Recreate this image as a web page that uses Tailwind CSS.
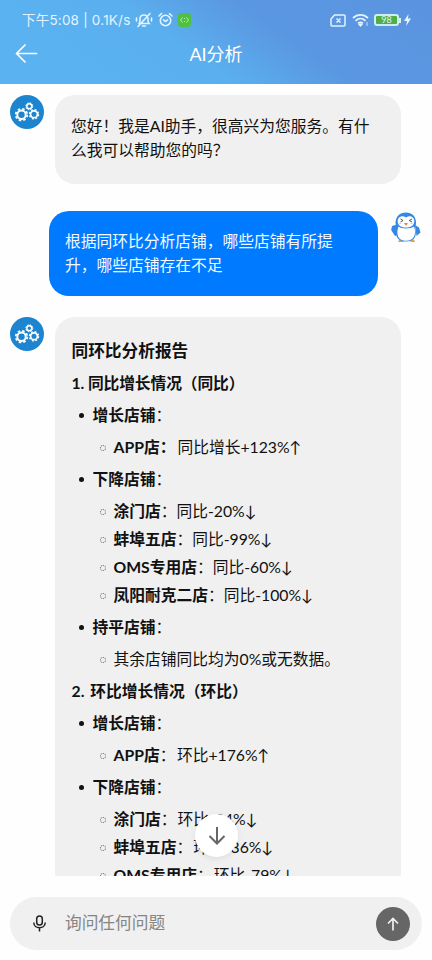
<!DOCTYPE html>
<html lang="zh-CN">
<head>
<meta charset="utf-8">
<meta name="viewport" content="width=device-width, initial-scale=1">
<title>AI分析</title>
<script src="https://cdn.jsdelivr.net/npm/@tailwindcss/browser@4"></script>
</head>
<body class="w-[432px] h-[960px] overflow-hidden bg-[#fefefe] flex flex-col font-['Lato','Noto_Sans_CJK_SC',sans-serif] text-[15.75px] text-[#111]">
<svg class="hidden">
  <defs>
    <g id="gears" fill="none" stroke="#fff">
      <circle cx="11.5" cy="19.700" r="4.200" stroke-width="2"/>
      <circle cx="11.5" cy="19.700" r="5.800" stroke-width="1.700" stroke-dasharray="2.500 2.055"/>
      <circle cx="24" cy="19.300" r="3.400" stroke-width="1.700"/>
      <circle cx="24" cy="19.300" r="4.600" stroke-width="1.300" stroke-dasharray="2 1.613"/>
      <circle cx="19.300" cy="11.300" r="2.500" stroke-width="1.500"/>
      <circle cx="19.300" cy="11.300" r="3.500" stroke-width="1" stroke-dasharray="1.500 1.249"/>
    </g>
  </defs>
</svg>

<header class="h-[84px] shrink-0 text-white bg-[linear-gradient(35deg,#5ab3f1_0%,#5ab0ef_42%,#5a97e2_64%,#5a94e0_100%)]">
  <div class="h-[40px] pl-[22px] pr-[21px] flex items-center justify-between">
    <div class="flex items-center text-[14px] text-[#e3f3ff]">
      <span class="whitespace-nowrap w-[113px] tracking-[0.2px] font-['Inter','Noto_Sans_CJK_SC',sans-serif] text-[13.500px]">下午5:08 | 0.1K/s</span>
      <svg class="w-[18px] h-[16px]" viewBox="0 0 18 16" fill="none" stroke="currentColor" stroke-width="1.600" stroke-linecap="round"><path d="M4 11.500h10c-1.200-1.200-1-2-1-4.500C13 4.500 11.500 3 9 3S5 4.500 5 7c0 2.500.2 3.300-1 4.500M7.500 14h3M15 1.500 3 14.500M1.500 6v3M16.500 6v3"/></svg>
      <svg class="ml-[5px] w-[15px] h-[16px]" viewBox="0 0 15 16" fill="none" stroke="currentColor" stroke-width="1.600" stroke-linecap="round"><circle cx="7.500" cy="8.500" r="5.200"/><path d="M1 4l2.500-2.300M14 4l-2.500-2.300M5.500 7.800l2 1.700 2-1.700"/></svg>
      <svg class="ml-[5px] w-[13px] h-[14px]" viewBox="0 0 13 14"><rect width="13" height="14" rx="3" fill="#4fc044"/><path d="M4.500 4.500 2.500 7l2 2.500M8.500 4.500l2 2.500-2 2.500M6 5.500h1M6 8.500h1" stroke="#b6eea2" fill="none"/></svg>
    </div>
    <div class="flex items-center text-[#e3f3ff]">
      <svg class="w-[16px] h-[13px]" viewBox="0 0 16 13" fill="none" stroke="currentColor" stroke-width="1.500"><path d="M4.500 1H14a1 1 0 0 1 1 1v9a1 1 0 0 1-1 1H2a1 1 0 0 1-1-1V5zM6.500 4.500l4 4M10.500 4.500l-4 4"/></svg>
      <svg class="ml-[6px] w-[17px] h-[14px]" viewBox="0 0 17 14" fill="none" stroke="currentColor" stroke-width="1.800"><path d="M1 5c4.300-4.200 10.700-4.200 15 0M3.500 7.800c3-2.900 7-2.900 10 0M6 10.400c1.500-1.300 3.500-1.300 5 0"/><path d="m8.500 13.500-2-2c1.200-1 2.800-1 4 0zM15 9v4" fill="currentColor" stroke-width=".8"/></svg>
      <div class="ml-[5px] w-[25px] h-[12px] rounded-[3px] border-2 border-[#d0edf0] bg-[#50ad47] text-[9px] leading-[8px] text-center">98</div>
      <div class="w-[2px] h-[5px] bg-[#d7f0ee]"></div>
      <svg class="ml-[3px] w-[7px] h-[12px]" viewBox="0 0 7 12" fill="currentColor"><path d="M4.500 0 0 7h3l-.8 5L7 4.500H4z"/></svg>
    </div>
  </div>
  <div class="h-[28px] pl-[15px] flex items-center relative">
    <svg class="w-[23px] h-[20px]" viewBox="0 0 23 20" fill="none" stroke="#fff" stroke-width="1.700" stroke-linecap="round" stroke-linejoin="round"><path d="M21.500 9.500H1.500M10 1 1.500 9.500 10 18"/></svg>
    <h1 class="absolute inset-x-0 text-center text-[18px] leading-[28px]">AI分析</h1>
  </div>
</header>

<main class="h-[792px] shrink-0 overflow-hidden pt-[11px] pl-[10px] relative">
  <section class="flex items-start gap-[11px]">
    <svg class="w-[34px] h-[34px] rounded-full bg-[#1d84cf]" viewBox="0 0 34 34"><use href="#gears"/></svg>
    <div class="w-[346px] h-[89px] rounded-[20px] bg-[#f0f0f0] pt-[19px] pl-[16px] leading-[23.600px] whitespace-nowrap">您好！我是AI助手，很高兴为您服务。有什<br>么我可以帮助您的吗？</div>
  </section>
  <section class="mt-[27px] ml-[39px] flex items-start gap-[12px]">
    <div class="w-[329px] h-[85px] rounded-[20px] bg-[#007bff] text-[#f4faff] pt-[18px] pl-[16px] leading-[23.600px] whitespace-nowrap">根据同环比分析店铺，哪些店铺有所提<br>升，哪些店铺存在不足</div>
    <svg class="w-[34px] h-[34px]" viewBox="0 0 34 34"><path d="M7 13.500 2 15l-.8 4L5 25l3-1zM25 14l4 2.500 1.500 5-4 3.500z" fill="#3389e6"/><path d="M9.500 28.500 8 31h5.500l1-1.500zM20 29.500l.5 1.500H25l-1-2.500z" fill="#e7a43b"/><path d="M16 1.500C9.500 1.500 6 5.500 5.500 11c0 4 2 5 1 8-1.500 7 2 11.500 9.500 11.500S27 26 25.500 19c-.8-3 .8-4.500.5-8-.5-6-4-9.500-10-9.500z" fill="#3389e6"/><path d="M8.500 15.500c2 2.500 13 2.500 15.500 0 3 8-.5 14.300-8 14.300S5.500 23.500 8.500 15.500z" fill="#fff"/><path d="M16 6.500c-4-3-8.500-.5-8.300 4 .2 4.500 4.300 6 8.300 6s8-1.500 8.300-6c.2-4.500-4.300-7-8.300-4z" fill="#fff"/><path d="m10.500 8 2.500 1.500-2.500 1.500M22 8l-2.800 1.500L22 11" fill="none" stroke="#444" stroke-width=".9"/><ellipse cx="10.300" cy="12.500" rx="1.300" ry=".7" fill="#fbc9bd"/><ellipse cx="21.700" cy="12.500" rx="1.300" ry=".7" fill="#fbc9bd"/><path d="M14 12h4l-2 3z" fill="#ec8148"/></svg>
  </section>
  <section class="mt-[21px] flex items-start gap-[11px]">
    <svg class="w-[34px] h-[34px] rounded-full bg-[#1d84cf]" viewBox="0 0 34 34"><use href="#gears"/></svg>
    <article class="w-[346px] h-[620px] rounded-t-[20px] bg-[#f0f0f0] pt-[19.500px] pl-[16.500px] leading-[28px] whitespace-nowrap">
      <h2 class="font-bold text-[16.700px] mb-[4px]">同环比分析报告</h2>
      <h3 class="font-bold mb-[4px] tracking-[-0.1px]">1. 同比增长情况（同比）</h3>
      <ul class="pl-[21px]">
        <li class="mb-[4px] relative before:absolute before:left-[-14px] before:top-[12px] before:size-[5px] before:rounded-full before:bg-[#111]"><b>增长店铺</b>：
          <ul class="mt-[4px] pl-[21px]">
            <li class="relative before:absolute before:left-[-14px] before:top-[12px] before:size-[6px] before:rounded-full before:border before:border-dotted before:border-[#666]"><b>APP店：</b><span class="ml-[2px]">同比增长+123%↑</span></li>
          </ul>
        </li>
        <li class="mb-[4px] relative before:absolute before:left-[-14px] before:top-[12px] before:size-[5px] before:rounded-full before:bg-[#111]"><b>下降店铺</b>：
          <ul class="mt-[4px] pl-[21px]">
            <li class="relative before:absolute before:left-[-14px] before:top-[12px] before:size-[6px] before:rounded-full before:border before:border-dotted before:border-[#666]"><b>涂门店</b>：同比-20%↓</li>
            <li class="relative before:absolute before:left-[-14px] before:top-[12px] before:size-[6px] before:rounded-full before:border before:border-dotted before:border-[#666]"><b>蚌埠五店</b>：同比-99%↓</li>
            <li class="relative before:absolute before:left-[-14px] before:top-[12px] before:size-[6px] before:rounded-full before:border before:border-dotted before:border-[#666]"><b>OMS专用店</b>：同比-60%↓</li>
            <li class="relative before:absolute before:left-[-14px] before:top-[12px] before:size-[6px] before:rounded-full before:border before:border-dotted before:border-[#666]"><b>凤阳耐克二店</b>：同比-100%↓</li>
          </ul>
        </li>
        <li class="mb-[4px] relative before:absolute before:left-[-14px] before:top-[12px] before:size-[5px] before:rounded-full before:bg-[#111]"><b>持平店铺</b>：
          <ul class="mt-[4px] pl-[21px]">
            <li class="relative before:absolute before:left-[-14px] before:top-[12px] before:size-[6px] before:rounded-full before:border before:border-dotted before:border-[#666]">其余店铺同比均为0%或无数据。</li>
          </ul>
        </li>
      </ul>
      <h3 class="font-bold mb-[4px]"><span class="mr-[2px]">2. </span>环比增长情况（环比）</h3>
      <ul class="pl-[21px]">
        <li class="mb-[4px] relative before:absolute before:left-[-14px] before:top-[12px] before:size-[5px] before:rounded-full before:bg-[#111]"><b>增长店铺</b>：
          <ul class="mt-[4px] pl-[21px]">
            <li class="relative before:absolute before:left-[-14px] before:top-[12px] before:size-[6px] before:rounded-full before:border before:border-dotted before:border-[#666]"><b>APP店</b>：<span class="ml-[1.500px]">环比+176%↑</span></li>
          </ul>
        </li>
        <li class="relative before:absolute before:left-[-14px] before:top-[12px] before:size-[5px] before:rounded-full before:bg-[#111]"><b>下降店铺</b>：
          <ul class="mt-[4px] pl-[21px]">
            <li class="relative before:absolute before:left-[-14px] before:top-[12px] before:size-[6px] before:rounded-full before:border before:border-dotted before:border-[#666]"><b>涂门店</b>：<span class="ml-[1px]">环比-24%↓</span></li>
            <li class="relative before:absolute before:left-[-14px] before:top-[12px] before:size-[6px] before:rounded-full before:border before:border-dotted before:border-[#666]"><b>蚌埠五店</b>：<span class="ml-[1px]">环比-36%↓</span></li>
            <li class="relative before:absolute before:left-[-14px] before:top-[12px] before:size-[6px] before:rounded-full before:border before:border-dotted before:border-[#666]"><b>OMS专用店</b>：<span class="ml-[1px]">环比-79%↓</span></li>
          </ul>
        </li>
      </ul>
    </article>
  </section>
  <button class="absolute left-[195px] top-[730px] w-[43px] h-[43px] rounded-full bg-white shadow-[0_2px_6px_rgba(0,0,0,0.08)] flex items-center justify-center"><svg class="w-[18px] h-[18px]" viewBox="0 0 18 18" fill="none" stroke="#666" stroke-width="2"><path d="M9 0v16M1.500 9 9 16.500 16.500 9"/></svg></button>
</main>

<footer class="pt-[21px] px-[10px]">
  <div class="h-[53px] rounded-full bg-[#f0f0f0] flex items-center pl-[22px] pr-[12px]">
    <svg class="w-[15px] h-[17px]" viewBox="0 0 15 17" fill="none" stroke="#222" stroke-width="1.500"><rect x="4.700" y="1" width="5.600" height="9" rx="2.800"/><path d="M1.800 7.500c0 7 11.400 7 11.400 0M7.500 12.500v4"/></svg>
    <span class="ml-[18px] flex-1 text-[16.700px] text-[#858585] pt-[1px]">询问任何问题</span>
    <button class="w-[34px] h-[34px] rounded-full bg-[#666] flex items-center justify-center"><svg class="w-[12px] h-[14px]" viewBox="0 0 12 14" fill="none" stroke="#f0f0f0" stroke-width="1.700"><path d="M6 13.500V1.500M1 6.500l5-5 5 5"/></svg></button>
  </div>
</footer>
</body>
</html>
